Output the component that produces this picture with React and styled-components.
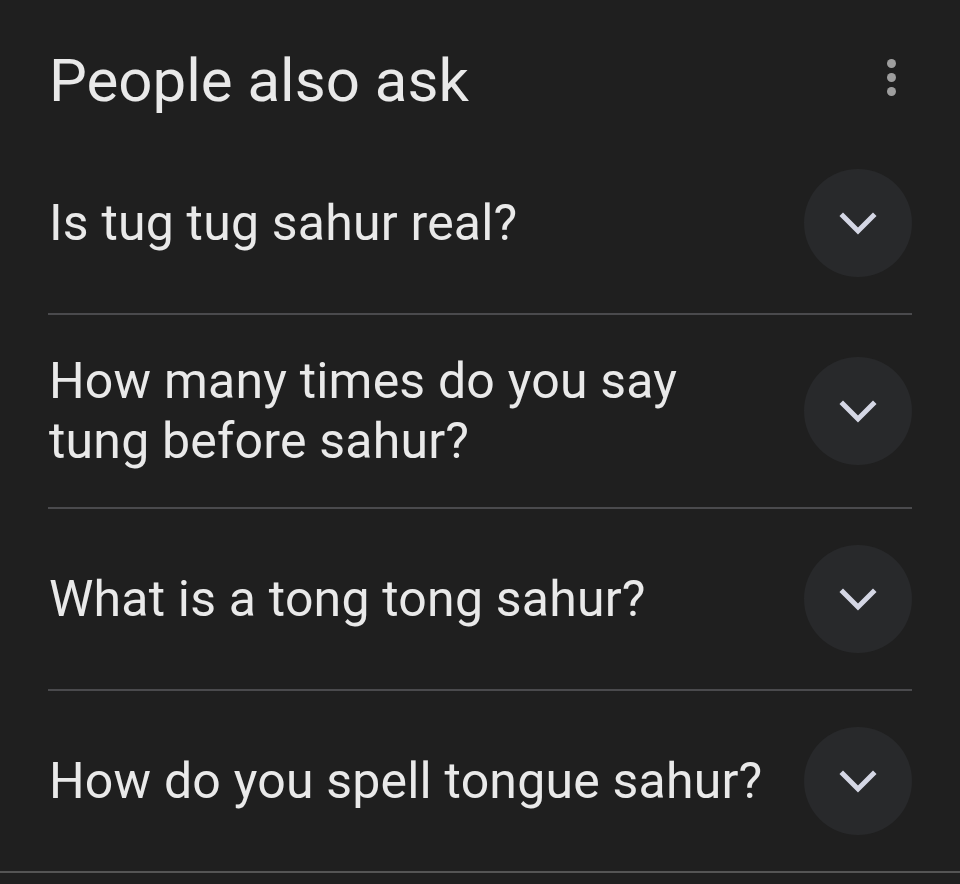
import React from "react";
import styled, { createGlobalStyle } from "styled-components";

const questions = [
  "Is tug tug sahur real?",
  "How many times do you say tung before sahur?",
  "What is a tong tong sahur?",
  "How do you spell tongue sahur?",
];

function App() {
  return (
    <>
      <GlobalStyle />
      <Page>
        <Section>
          <Header>
            <Title>People also ask</Title>
            <MoreButton aria-label="More options">
              <Dot />
              <Dot />
              <Dot />
            </MoreButton>
          </Header>

          <List>
            {questions.map((q) => (
              <Row key={q}>
                <Question>{q}</Question>
                <ExpandButton aria-label="Expand">
                  <svg width="40" height="28" viewBox="-20 -14 40 28">
                    <path
                      d="M-15 -7 L0 8 L15 -7"
                      fill="none"
                      stroke="#d4d6e4"
                      strokeWidth="5"
                      strokeLinecap="square"
                    />
                  </svg>
                </ExpandButton>
              </Row>
            ))}
          </List>
        </Section>
      </Page>
    </>
  );
}

const GlobalStyle = createGlobalStyle`
  html, body {
    margin: 0;
    padding: 0;
    background: #1f1f1f;
  }
`;

// 전체 페이지
const Page = styled.div`
  width: 960px;
  min-height: 884px;
  background: #1f1f1f;
  font-family: Roboto, "Open Sans", sans-serif;
  color: #e9e9e9;
`;

const Section = styled.section`
  border-bottom: 2px solid #545454;
`;

// 상단 제목
const Header = styled.div`
  height: 133px;
  padding: 0 48px 0 49px;
  display: flex;
  align-items: center;
  justify-content: space-between;
  box-sizing: border-box;
`;

const Title = styled.h2`
  margin: 0;
  padding-top: 28px;
  font-size: 60px;
  font-weight: 400;
`;

const MoreButton = styled.button`
  background: none;
  border: none;
  padding: 0;
  margin: 59px 16px 0 0;
  display: flex;
  flex-direction: column;
  gap: 5px;
  align-self: flex-start;
`;

const Dot = styled.span`
  width: 9px;
  height: 9px;
  border-radius: 50%;
  background: #9e9e9e;
`;

const List = styled.div`
  padding: 0 48px;
`;

// 질문 행
const Row = styled.div`
  display: flex;
  align-items: center;
  justify-content: space-between;
  gap: 28px;
  padding: 36px 0;
  border-bottom: 2px solid #4a4a4d;

  &:last-child {
    border-bottom: none;
  }
`;

const Question = styled.div`
  flex: 1;
  padding-left: 1px;
  font-size: 50px;
  line-height: 60px;
  font-weight: 400;
  letter-spacing: 0.2px;
`;

const ExpandButton = styled.button`
  width: 108px;
  height: 108px;
  flex-shrink: 0;
  border-radius: 50%;
  border: none;
  background: #28292b;
  display: flex;
  align-items: center;
  justify-content: center;
  padding: 0;
`;

export default App;
